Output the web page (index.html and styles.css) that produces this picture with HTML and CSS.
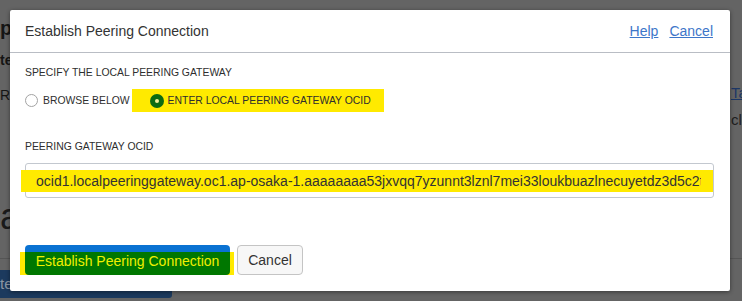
FILE: index.html
```html
<!DOCTYPE html>
<html>
<head>
<meta charset="utf-8">
<link rel="stylesheet" href="styles.css">
</head>
<body>
<div class="page">
  <div class="page-top">
    <div class="page-left">
      <div class="pl-1">p</div>
      <div class="pl-2">te</div>
      <div class="pl-3">R l</div>
      <div class="pl-4">a</div>
    </div>
    <div class="page-right">
      <div class="pr-1"><a>Ta</a></div>
      <div class="pr-2">cle</div>
    </div>
  </div>
  <div class="page-line"></div>
  <div class="page-btn">te</div>
</div>
<div class="dialog" role="dialog">
  <div class="dlg-head">
    <div class="dlg-title">Establish Peering Connection</div>
    <div class="dlg-links"><a class="lnk">Help</a><a class="lnk">Cancel</a></div>
  </div>
  <div class="dlg-body">
    <div class="label first">SPECIFY THE LOCAL PEERING GATEWAY</div>
    <div class="radios">
      <label class="opt"><span class="radio"></span>BROWSE BELOW</label>
      <label class="opt opt-sel"><span class="radio on"></span>ENTER LOCAL PEERING GATEWAY OCID</label>
    </div>
    <div class="label second">PEERING GATEWAY OCID</div>
    <div class="field"><div class="mark"><div class="mark-text">ocid1.localpeeringgateway.oc1.ap-osaka-1.aaaaaaaa53jxvqq7yzunnt3lznl7mei33loukbuazlnecuyetdz3d5c2tkq5ysq</div></div></div>
    <div class="actions">
      <div class="btn-hl"><button class="btn-primary">Establish Peering Connection</button></div>
      <button class="btn-cancel">Cancel</button>
    </div>
  </div>
</div>
</body>
</html>
```
FILE: styles.css
```css
html, body {
  margin: 0;
  padding: 0;
}
body {
  width: 742px;
  height: 301px;
  overflow: hidden;
  font-family: "Liberation Sans", Arial, sans-serif;
  background: #646464;
}
.page {
  height: 301px;
  display: flex;
  flex-direction: column;
  background: #646464;
  color: #151515;
}
.page-top {
  height: 258px;
  display: flex;
  justify-content: space-between;
}
.page-left {
  width: 40px;
}
.pl-1 {
  margin-top: 17px;
  font-size: 20px;
  font-weight: bold;
  line-height: 22px;
}
.pl-2 {
  margin-top: 13px;
  font-size: 14px;
  font-weight: bold;
  line-height: 16px;
}
.pl-3 {
  margin-top: 19px;
  font-size: 14px;
  line-height: 16px;
}
.pl-4 {
  margin-top: 94px;
  font-size: 36px;
  line-height: 40px;
  color: #1a1a1a;
}
.page-right {
  width: 11px;
  overflow: hidden;
  white-space: nowrap;
}
.pr-1 {
  margin-top: 84px;
  font-size: 15px;
  line-height: 18px;
}
.pr-1 a {
  color: #1d3766;
  text-decoration: underline;
}
.pr-2 {
  margin-top: 9px;
  font-size: 15px;
  line-height: 18px;
  color: #1e1e1e;
}
.page-line {
  height: 1px;
  background: #555;
}
.page-btn {
  margin-top: 11px;
  width: 172px;
  height: 28px;
  background: #1c3a5e;
  color: #8b96a3;
  font-size: 15px;
  line-height: 28px;
  border-radius: 0 3px 3px 0;
}
.dialog {
  position: absolute;
  left: 10px;
  top: 10px;
  width: 720px;
  height: 281px;
  background: #fff;
  border-radius: 2px;
  box-shadow: 0 1px 4px rgba(0, 0, 0, 0.45);
  color: #333;
}
.dlg-head {
  height: 43px;
  box-sizing: border-box;
  border-bottom: 1px solid #b9bdc4;
  display: flex;
  align-items: center;
  justify-content: space-between;
  padding: 0 17px 0 15px;
}
.dlg-title {
  font-size: 14px;
  color: #333;
}
.dlg-links {
  display: flex;
  gap: 11px;
}
.lnk {
  font-size: 14px;
  color: #3d76c9;
  text-decoration: underline;
  cursor: pointer;
}
.dlg-body {
  padding: 0 16px 0 15px;
}
.label {
  font-size: 10.4px;
  line-height: 12px;
  color: #2e2e2e;
}
.label.first {
  margin-top: 14px;
}
.label.second {
  margin-top: 29px;
}
.radios {
  margin-top: 10px;
  display: flex;
  align-items: center;
  height: 23px;
}
.opt {
  display: flex;
  align-items: center;
  font-size: 10.4px;
  color: #2e2e2e;
  height: 23px;
}
.opt-sel {
  margin-left: 2px;
  background: #ffea00;
  padding: 0 13px 0 18px;
}
.radio {
  width: 13px;
  height: 13px;
  box-sizing: border-box;
  border: 1px solid #a3a3a3;
  border-radius: 50%;
  background: #fff;
  margin-right: 5px;
  position: relative;
}
.radio.on {
  width: 14px;
  height: 14px;
  border: none;
  background: #0b6b12;
  margin-right: 4px;
}
.radio.on::after {
  content: "";
  position: absolute;
  left: 5px;
  top: 5px;
  width: 4px;
  height: 4px;
  border-radius: 50%;
  background: #f2ee9a;
}
.field {
  margin-top: 10px;
  height: 35px;
  box-sizing: border-box;
  border: 1px solid #c3c8cf;
  border-radius: 3px;
  padding-top: 6px;
}
.mark {
  margin-left: -5px;
  height: 22px;
  background: #ffea00;
  padding: 0 12px 0 15px;
}
.mark-text {
  line-height: 22px;
  font-size: 14px;
  color: #333;
  white-space: nowrap;
  overflow: hidden;
}
.actions {
  margin-top: 47px;
  display: flex;
  align-items: flex-start;
}
.btn-hl {
  margin-left: -5px;
  padding: 0 4px 0 5px;
  background: linear-gradient(to bottom, transparent 7px, #ffea00 7px);
  height: 30px;
}
.btn-primary {
  display: block;
  width: 205px;
  height: 30px;
  border: none;
  border-radius: 4px;
  background: linear-gradient(to bottom, #0a72d2 0, #0a72d2 7px, #007700 7px);
  color: #f0f000;
  font-family: "Liberation Sans", Arial, sans-serif;
  font-size: 14px;
  padding: 1px 0 0;
}
.btn-cancel {
  margin-left: 3px;
  width: 66px;
  height: 30px;
  box-sizing: border-box;
  border: 1px solid #c4c4c4;
  border-radius: 4px;
  background: #f7f7f7;
  color: #333;
  font-family: "Liberation Sans", Arial, sans-serif;
  font-size: 14px;
  padding: 0;
}
```
